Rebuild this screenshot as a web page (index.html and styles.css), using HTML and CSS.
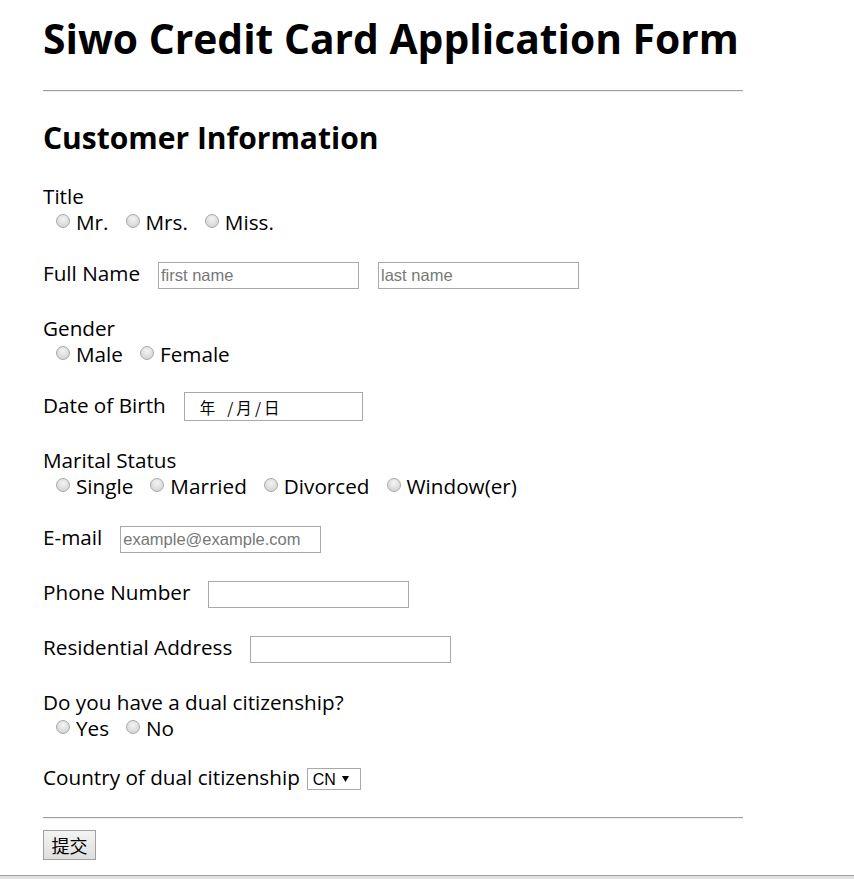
FILE: index.html
```html
<!DOCTYPE html>
<html lang="en">
<head>
<meta charset="utf-8">
<title>Siwo Credit Card Application Form</title>
<link rel="stylesheet" href="styles.css">
</head>
<body>
<div class="page">
  <h1 class="title">Siwo Credit Card Application Form</h1>
  <hr class="rule">
  <h2 class="subtitle">Customer Information</h2>
  <form class="form">
    <div class="field">
      <div class="label">Title</div>
      <div class="choices">
        <label class="choice"><input class="radio" type="radio" name="title">Mr.</label>
        <label class="choice"><input class="radio" type="radio" name="title">Mrs.</label>
        <label class="choice"><input class="radio" type="radio" name="title">Miss.</label>
      </div>
    </div>
    <div class="row">
      <span class="label">Full Name</span>
      <input class="text" type="text" placeholder="first name">
      <input class="text" type="text" placeholder="last name">
    </div>
    <div class="field">
      <div class="label">Gender</div>
      <div class="choices">
        <label class="choice"><input class="radio" type="radio" name="gender">Male</label>
        <label class="choice"><input class="radio" type="radio" name="gender">Female</label>
      </div>
    </div>
    <div class="row">
      <span class="label">Date of Birth</span>
      <span class="date"><span class="date-y">年</span><span class="date-sep">/</span>月<span class="date-sep">/</span>日</span>
    </div>
    <div class="field">
      <div class="label">Marital Status</div>
      <div class="choices">
        <label class="choice"><input class="radio" type="radio" name="marital">Single</label>
        <label class="choice"><input class="radio" type="radio" name="marital">Married</label>
        <label class="choice"><input class="radio" type="radio" name="marital">Divorced</label>
        <label class="choice"><input class="radio" type="radio" name="marital">Window(er)</label>
      </div>
    </div>
    <div class="row">
      <span class="label">E-mail</span>
      <input class="text" type="email" placeholder="example@example.com">
    </div>
    <div class="row">
      <span class="label">Phone Number</span>
      <input class="text" type="text">
    </div>
    <div class="row">
      <span class="label">Residential Address</span>
      <input class="text" type="text">
    </div>
    <div class="field">
      <div class="label">Do you have a dual citizenship?</div>
      <div class="choices">
        <label class="choice"><input class="radio" type="radio" name="dual">Yes</label>
        <label class="choice"><input class="radio" type="radio" name="dual">No</label>
      </div>
    </div>
    <div class="row row-select">
      <span class="label label-tight">Country of dual citizenship</span>
      <span class="select-wrap">
        <select class="select"><option>CN</option></select>
        <svg class="select-arrow" width="7" height="6" viewBox="0 0 7 6"><path d="M0 0H7L3.5 6Z" fill="#000"/></svg>
      </span>
    </div>
    <hr class="rule rule-bottom">
    <button class="submit" type="submit">提交</button>
  </form>
</div>
<div class="window-edge"></div>
</body>
</html>
```

FILE: styles.css
```css
html, body {
  margin: 0;
  padding: 0;
  background: #fff;
}

body {
  font-family: "Open Sans", "Noto Sans", "Noto Sans CJK SC", sans-serif;
  color: #000;
}

.page {
  width: 700px;
  padding-left: 43px;
  padding-top: 14px;
}

.title {
  margin: 0;
  font-size: 40.8px;
  line-height: 48px;
  font-weight: 700;
  white-space: nowrap;
}

.rule {
  margin: 28px 0 0;
  height: 0;
  border: 0;
  border-top: 1px solid #9f9f9f;
  border-bottom: 1px solid #eeeeee;
}

.subtitle {
  margin: 28px 0 0;
  font-size: 30px;
  line-height: 36px;
  font-weight: 700;
}

.form {
  margin-top: 27px;
  display: flex;
  flex-direction: column;
  align-items: flex-start;
}

.field + .row,
.field + .field {
  margin-top: 27px;
}

.row + .field {
  margin-top: 26px;
}

.row + .row {
  margin-top: 28px;
}

.field + .row-select {
  margin-top: 25px;
}

.field {
  display: flex;
  flex-direction: column;
}

.label {
  font-size: 20.7px;
  line-height: 26px;
  white-space: nowrap;
}

.choices {
  display: flex;
  padding-left: 13px;
  font-size: 20.7px;
  line-height: 26px;
}

.choice {
  display: flex;
  align-items: center;
  margin-right: 17px;
}

.radio {
  appearance: none;
  -webkit-appearance: none;
  width: 14px;
  height: 14px;
  margin: 0 6px 0 0;
  border-radius: 50%;
  border: 1px solid #a8a8a8;
  background: radial-gradient(circle at 50% 35%, #f4f4f4 0%, #dcdcdc 60%, #cfcfcf 100%);
  box-sizing: border-box;
  position: relative;
  top: -1px;
}

.row {
  display: flex;
  align-items: flex-start;
  height: 27px;
}

.row .label {
  line-height: 22px;
  margin-right: 18px;
}

.text {
  width: 201px;
  height: 27px;
  box-sizing: border-box;
  border: 1px solid #a9a9a9;
  padding: 0 2px;
  margin: 0 19px 0 0;
  font-family: "Liberation Sans", Arial, sans-serif;
  font-size: 16.5px;
  color: #000;
  background: #fff;
  outline: none;
}

.text::placeholder {
  color: #777;
}

.date {
  align-self: flex-end;
  width: 179px;
  height: 29px;
  box-sizing: border-box;
  border: 1px solid #a9a9a9;
  padding-left: 15px;
  display: flex;
  align-items: center;
  font-family: "Noto Sans CJK SC", sans-serif;
  font-size: 15.5px;
}

.date-y {
  margin-right: 9px;
}

.date-sep {
  margin: 0 3px;
}

.row-select {
  height: 26px;
  align-items: center;
}

.row-select .label {
  align-self: flex-start;
}

.row .label-tight {
  margin-right: 7px;
}

.select-wrap {
  position: relative;
  display: inline-flex;
}

.select {
  appearance: none;
  -webkit-appearance: none;
  width: 54px;
  height: 22px;
  box-sizing: border-box;
  border: 1px solid #a9a9a9;
  border-radius: 0;
  background: #fff;
  padding: 0 0 0 5px;
  font-family: "Liberation Sans", Arial, sans-serif;
  font-size: 16px;
  color: #000;
}

.select-arrow {
  position: absolute;
  right: 12px;
  top: 8px;
  pointer-events: none;
}

.rule-bottom {
  margin: 25px 0 0;
  width: 700px;
}

.submit {
  margin-top: 11px;
  width: 53px;
  height: 30px;
  border: 1px solid #a0a0a0;
  border-radius: 0;
  background: linear-gradient(#f4f4f4, #dedede);
  font-family: "Noto Sans CJK SC", sans-serif;
  font-size: 18px;
  padding: 0;
  color: #000;
}

.window-edge {
  margin-top: 15px;
  height: 5px;
  border-top: 1px solid #a0a0a0;
  background: #e2e2e2;
}
```
